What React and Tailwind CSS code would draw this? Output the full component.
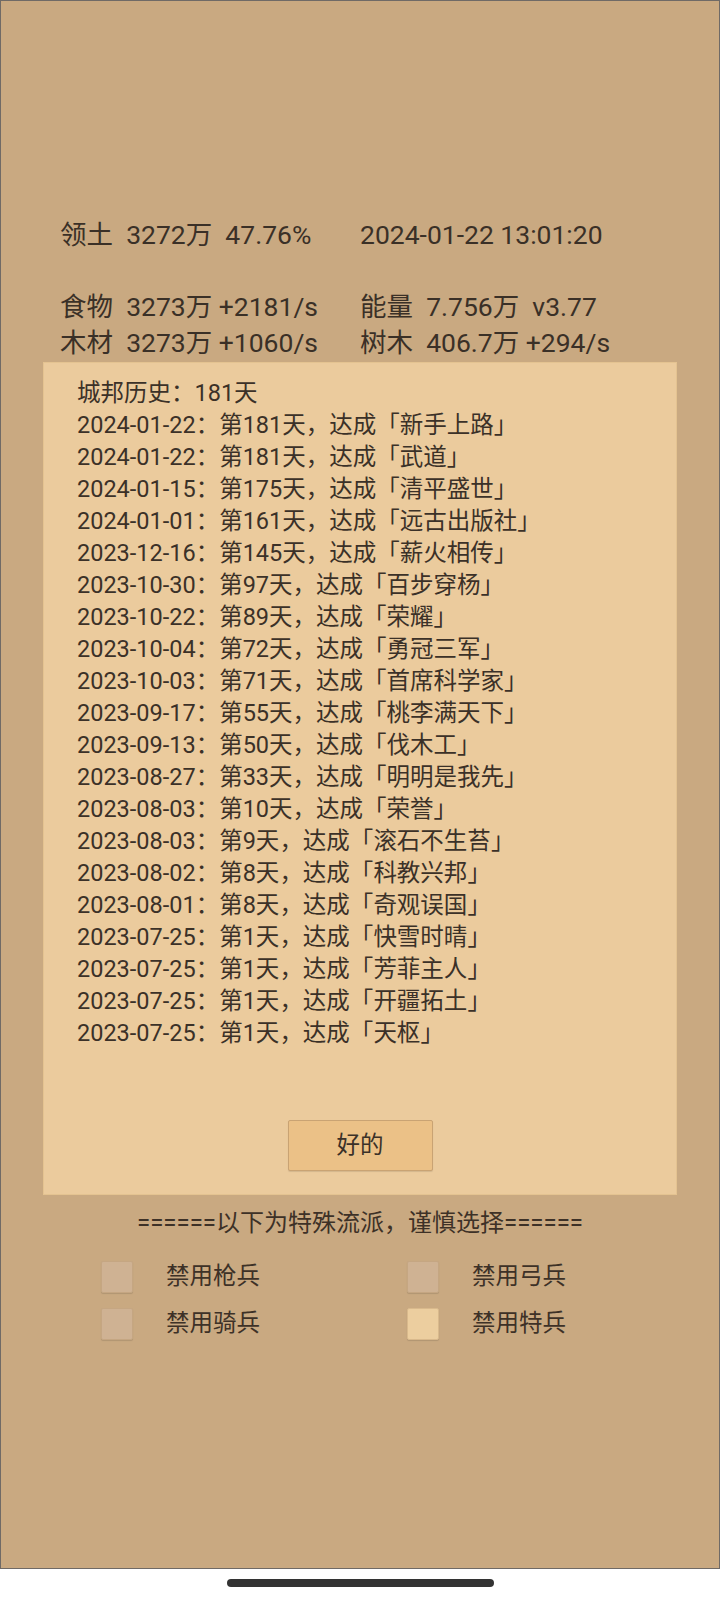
import React from 'react';

const font = { fontFamily: 'Roboto, "Noto Sans CJK SC", sans-serif' };

const history = [
  ['2024-01-22', '第181天', '新手上路'],
  ['2024-01-22', '第181天', '武道'],
  ['2024-01-15', '第175天', '清平盛世'],
  ['2024-01-01', '第161天', '远古出版社'],
  ['2023-12-16', '第145天', '薪火相传'],
  ['2023-10-30', '第97天', '百步穿杨'],
  ['2023-10-22', '第89天', '荣耀'],
  ['2023-10-04', '第72天', '勇冠三军'],
  ['2023-10-03', '第71天', '首席科学家'],
  ['2023-09-17', '第55天', '桃李满天下'],
  ['2023-09-13', '第50天', '伐木工'],
  ['2023-08-27', '第33天', '明明是我先'],
  ['2023-08-03', '第10天', '荣誉'],
  ['2023-08-03', '第9天', '滚石不生苔'],
  ['2023-08-02', '第8天', '科教兴邦'],
  ['2023-08-01', '第8天', '奇观误国'],
  ['2023-07-25', '第1天', '快雪时晴'],
  ['2023-07-25', '第1天', '芳菲主人'],
  ['2023-07-25', '第1天', '开疆拓土'],
  ['2023-07-25', '第1天', '天枢'],
];

const options = [
  { label: '禁用枪兵', checked: false },
  { label: '禁用弓兵', checked: false },
  { label: '禁用骑兵', checked: false },
  { label: '禁用特兵', checked: true },
];

function Checkbox({ label, checked }) {
  return (
    <div className="flex items-center h-[47px]">
      <div
        className={`w-[32px] h-[32px] rounded-[2px] border ${
          checked ? 'bg-[#ecce9f] border-[#d9b98c]' : 'bg-[#cfb293] border-[#c5a682]'
        } shadow-[0_1px_1px_rgba(0,0,0,0.12)]`}
      />
      <span className="ml-[33px] text-[23.5px] text-[#3d3127]">{label}</span>
    </div>
  );
}

export default function App() {
  return (
    <div className="w-[720px] h-[1600px] bg-white flex flex-col" style={font}>
      <div className="h-[1569px] border border-[#6f6a66] bg-[#c9a981] flex flex-col">
        {/* 顶部数据 */}
        <div className="pt-[216px] pl-[59px] text-[26.5px] leading-[36px] text-[#3a3027] grid grid-cols-[300px_auto] whitespace-pre">
          <div>领土  3272万  47.76%</div>
          <div>2024-01-22 13:01:20</div>
          <div className="h-[36px]" />
          <div className="h-[36px]" />
          <div>食物  3273万 +2181/s</div>
          <div>能量  7.756万  v3.77</div>
          <div>木材  3273万 +1060/s</div>
          <div>树木  406.7万 +294/s</div>
        </div>

        {/* 历史弹窗 */}
        <div className="mt-[1px] ml-[42px] w-[634px] h-[833px] bg-[#ebcb9d] border border-[#e4c391] flex flex-col pt-[14px] pl-[33px] pb-[23px]">
          <div className="text-[23.5px] leading-[32px] text-[#3b3128]">
            <div>城邦历史：181天</div>
            {history.map(([date, day, name], i) => (
              <div key={i}>
                {date}：{day}，达成「{name}」
              </div>
            ))}
          </div>
          <div className="mt-auto flex justify-center pr-[33px]">
            <button className="w-[145px] h-[51px] bg-[#ebc187] border border-[#c9a373] rounded-[2px] text-[23.5px] text-[#3b3128] shadow-[0_1px_1px_rgba(0,0,0,0.1)]">
              好的
            </button>
          </div>
        </div>

        {/* 特殊流派 */}
        <div className="mt-[12px] text-center text-[24px] leading-[32px] text-[#3d3127]">
          ======以下为特殊流派，谨慎选择======
        </div>
        <div className="mt-[14px] ml-[100px] grid grid-cols-[306px_auto]">
          {options.map((o) => (
            <Checkbox key={o.label} label={o.label} checked={o.checked} />
          ))}
        </div>
      </div>
      <div className="flex justify-center mt-[10px]">
        <div className="w-[267px] h-[8px] rounded-full bg-[#333333]" />
      </div>
    </div>
  );
}
